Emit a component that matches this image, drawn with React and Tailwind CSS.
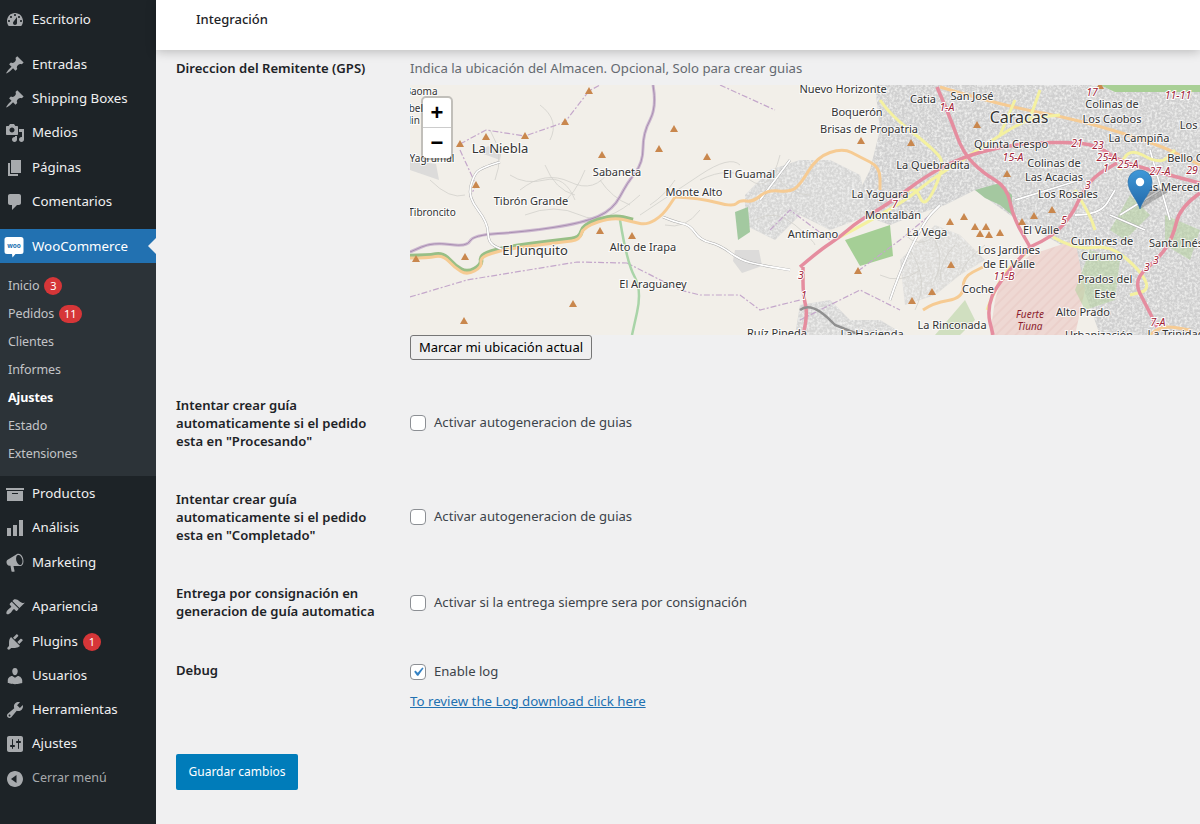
const icons = {
  dashboard: 'M3.76 16h12.48c1.1-1.37 1.76-3.11 1.76-5 0-4.42-3.58-8-8-8s-8 3.58-8 8c0 1.89.66 3.63 1.76 5zM10 4c.55 0 1 .45 1 1s-.45 1-1 1-1-.45-1-1 .45-1 1-1zM6 6c.55 0 1 .45 1 1s-.45 1-1 1-1-.45-1-1 .45-1 1-1zm8 0c.55 0 1 .45 1 1s-.45 1-1 1-1-.45-1-1 .45-1 1-1zm-5.37 5.55L12 7v6c0 1.1-.9 2-2 2s-2-.9-2-2c0-.57.24-1.08.63-1.45zM4 10c.55 0 1 .45 1 1s-.45 1-1 1-1-.45-1-1 .45-1 1-1zm12 0c.55 0 1 .45 1 1s-.45 1-1 1-1-.45-1-1 .45-1 1-1z',
  pin: 'M10.44 3.02l1.82-1.82 6.36 6.35-1.83 1.82c-1.05-.68-2.48-.57-3.41.36l-.75.75c-.92.93-1.04 2.35-.35 3.41l-1.83 1.82-2.41-2.41-2.8 2.79c-.42.42-3.38 2.71-3.8 2.29s1.86-3.39 2.28-3.81l2.79-2.79L4.1 9.36l1.83-1.82c1.05.69 2.48.57 3.4-.36l.75-.75c.93-.92 1.05-2.35.36-3.41z',
  media: 'M13 11V4c0-.55-.45-1-1-1h-1.67L9 1H5L3.67 3H2c-.55 0-1 .45-1 1v7c0 .55.45 1 1 1h10c.55 0 1-.45 1-1zM7 4.5c1.38 0 2.5 1.12 2.5 2.5S8.38 9.5 7 9.5 4.5 8.38 4.5 7 5.62 4.5 7 4.5zM14 6h5v10.5c0 1.38-1.12 2.5-2.5 2.5S14 17.88 14 16.5s1.12-2.5 2.5-2.5c.17 0 .34.02.5.05V9h-3V6zm-4 8.05V13h2v3.5c0 1.38-1.12 2.5-2.5 2.5S7 17.88 7 16.5 8.12 14 9.5 14c.17 0 .34.02.5.05z',
  page: 'M6 15V2h10v13H6zm-1 1h8v2H3V5h2v11z',
  comment: 'M5 2h9c1.1 0 2 .9 2 2v7c0 1.1-.9 2-2 2h-2l-5 5v-5H5c-1.1 0-2-.9-2-2V4c0-1.1.9-2 2-2z',
  archive: 'M19 4v2H1V4h18zM2 7h16v10H2V7zm11 3V9H7v1h6z',
  chart: 'M18 18V2h-4v16h4zm-6 0V7H8v11h4zm-6 0v-8H2v8h4z',
  megaphone: 'M18.15 5.94c.46 1.62.38 3.22-.02 4.48-.42 1.28-1.26 2.18-2.3 2.48-.16.06-.26.06-.4.06-.06.02-.12.02-.18.02-.06.02-.14.02-.22.02H8.5l1.1 5.2c.02.14-.06.26-.14.34-.08.1-.24.16-.34.16H6.95c-.1 0-.26-.06-.34-.16-.08-.08-.16-.2-.14-.34l-1-5.5H4.25c-.5.06-1.08-.18-1.54-.62s-.88-1.08-1.06-1.88c-.24-.8-.2-1.56-.02-2.2.18-.62.58-1.08 1.06-1.3l9.02-5.42c.1-.06.18-.1.24-.16.06-.04.14-.08.24-.12.16-.08.28-.12.5-.18 1.04-.3 2.24.1 3.22.98s1.84 2.24 2.26 3.86zm-2.58 5.98c.4-.1.74-.34 1.04-.7.58-.7.86-1.76.86-3.04 0-.64-.1-1.3-.26-1.98-.34-1.36-1.02-2.5-1.78-3.24s-1.68-1.1-2.46-.88c-.82.22-1.4.96-1.7 2-.32 1.04-.28 2.36.06 3.72.38 1.36 1 2.5 1.8 3.24.78.74 1.62 1.1 2.44.88z',
  brush: 'M14.48 11.06L7.41 3.99l1.5-1.5c.5-.56 2.3-.47 3.51.32 1.21.8 1.43 1.28 2.91 2.1 1.18.64 2.45 1.26 4.45.85zm-.71.71L6.7 4.7 4.93 6.47c-.39.39-.39 1.02 0 1.41l1.06 1.06c.39.39.39 1.03 0 1.42-.6.6-1.43 1.11-2.21 1.69-.35.26-.7.53-1.01.84-1.35 1.34-1.86 3.15-1.05 4c.84.81 2.65.29 4.02-1.09.31-.31.58-.66.84-1.01.58-.78 1.09-1.61 1.69-2.21.39-.39 1.03-.39 1.42 0l1.06 1.06c.39.39 1.02.39 1.41 0z',
  plugin: 'M13.11 4.36L9.87 7.6 8 5.73l3.24-3.24c.35-.34 1.05-.2 1.56.32.52.51.66 1.21.31 1.55zm-8 1.77l.91-1.12 9.01 9.01-1.19.84c-.71.71-2.63 1.16-3.82 1.16H6.14L4.9 17.26c-.59.59-1.54.59-2.12 0-.59-.58-.59-1.53 0-2.12l1.24-1.24v-3.88c0-1.13.4-3.19 1.09-3.89zm7.26 3.97l3.24-3.24c.34-.35 1.04-.21 1.55.31.52.51.66 1.21.31 1.55l-3.24 3.25z',
  users: 'M10 9.25c-2.27 0-2.73-3.44-2.73-3.44C7 4.02 7.82 2 9.97 2c2.16 0 2.98 2.02 2.71 3.81 0 0-.41 3.44-2.68 3.44zm0 2.57L12.72 10c2.39 0 4.52 2.33 4.52 4.53v2.49s-3.65 1.13-7.24 1.13c-3.65 0-7.24-1.13-7.24-1.13v-2.49c0-2.25 1.94-4.48 4.47-4.48z',
  tools: 'M16.68 9.77c-1.34 1.34-3.3 1.67-4.95.99l-5.41 6.52c-.99.99-2.59.99-3.58 0s-.99-2.59 0-3.57l6.52-5.42c-.68-1.65-.35-3.61.99-4.95 1.28-1.28 3.12-1.62 4.72-1.06l-2.89 2.89 2.82 2.82 2.86-2.87c.53 1.58.18 3.39-1.08 4.65zM3.81 16.21c.4.39 1.04.39 1.43 0 .4-.4.4-1.04 0-1.43-.39-.4-1.03-.4-1.43 0-.39.39-.39 1.03 0 1.43z',
  settings: 'M18 16V4c0-1.1-.9-2-2-2H4c-1.1 0-2 .9-2 2v12c0 1.1.9 2 2 2h12c1.1 0 2-.9 2-2zM8 11h1c.55 0 1 .45 1 1s-.45 1-1 1H8v1.5c0 .28-.22.5-.5.5s-.5-.22-.5-.5V13H6c-.55 0-1-.45-1-1s.45-1 1-1h1V5.5c0-.28.22-.5.5-.5s.5.22.5.5V11zm5-2h-1c-.55 0-1-.45-1-1s.45-1 1-1h1V5.5c0-.28.22-.5.5-.5s.5.22.5.5V7h1c.55 0 1 .45 1 1s-.45 1-1 1h-1v5.5c0 .28-.22.5-.5.5s-.5-.22-.5-.5V9z',
  collapse: 'M18 10c0-4.42-3.58-8-8-8s-8 3.58-8 8 3.58 8 8 8 8-3.58 8-8zm-6.5 4L6 10l5.5-4v8z',
}

function Dashicon({ name, className = 'text-[#a7aaad]' }) {
  return (
    <svg viewBox="0 0 20 20" className={`w-5 h-5 shrink-0 ${className}`} fill="currentColor" fillRule="evenodd">
      <path d={icons[name]} />
    </svg>
  )
}

function Badge({ n }) {
  return (
    <span className="ml-[5px] min-w-[18px] h-[18px] px-[5px] rounded-full bg-[#d63638] text-white text-[11px] leading-[18px] text-center">{n}</span>
  )
}

function MenuItem({ icon, label, badge }) {
  return (
    <div className="flex items-center h-[34.25px] pt-[2px] pl-[5px]">
      <Dashicon name={icon} />
      <span className="ml-[7px] text-[13.3px] text-[#f0f0f1]">{label}</span>
      {badge && <Badge n={badge} />}
    </div>
  )
}

function SubItem({ label, badge, current }) {
  return (
    <div className={`flex items-center h-[28px] pt-[2px] pl-2 text-[12.5px] ${current ? 'font-bold text-white' : 'text-[#c3c4c7]'}`}>
      <span className="tracking-[-0.1px]">{label}</span>
      {badge && <Badge n={badge} />}
    </div>
  )
}

function Sidebar() {
  return (
    <aside className="w-[156px] shrink-0 bg-[#1d2327] pt-[1.5px]">
      <MenuItem icon="dashboard" label="Escritorio" />
      <div className="h-[11px]" />
      <MenuItem icon="pin" label="Entradas" />
      <MenuItem icon="pin" label="Shipping Boxes" />
      <MenuItem icon="media" label="Medios" />
      <MenuItem icon="page" label="Páginas" />
      <MenuItem icon="comment" label="Comentarios" />
      <div className="h-[11px]" />
      <div className="relative flex items-center h-[34px] pt-[2px] pl-1 bg-[#2271b1]">
        <svg viewBox="0 0 20 22" className="w-5 h-[22px] shrink-0">
          <path d="M3 1h14a2.5 2.5 0 0 1 2.5 2.5v12a2.5 2.5 0 0 1-2.5 2.5h-5.5l-3 3.5-.5-3.5H3a2.5 2.5 0 0 1-2.5-2.5v-12A2.5 2.5 0 0 1 3 1z" fill="#fff" />
          <text x="10" y="12" textAnchor="middle" fontSize="6.5" fontWeight="700" fill="#2271b1" fontFamily="'Noto Sans', sans-serif">woo</text>
        </svg>
        <span className="ml-2 text-[13.3px] text-white">WooCommerce</span>
        <span className="absolute right-0 top-[9px] border-y-8 border-r-8 border-y-transparent border-r-[#f0f0f1]" />
      </div>
      <div className="bg-[#2c3338] py-2 h-[213px]">
        <SubItem label="Inicio" badge="3" />
        <SubItem label="Pedidos" badge="11" />
        <SubItem label="Clientes" />
        <SubItem label="Informes" />
        <SubItem label="Ajustes" current />
        <SubItem label="Estado" />
        <SubItem label="Extensiones" />
      </div>
      <MenuItem icon="archive" label="Productos" />
      <MenuItem icon="chart" label="Análisis" />
      <MenuItem icon="megaphone" label="Marketing" />
      <div className="h-[10.5px]" />
      <MenuItem icon="brush" label="Apariencia" />
      <MenuItem icon="plugin" label="Plugins" badge="1" />
      <MenuItem icon="users" label="Usuarios" />
      <MenuItem icon="tools" label="Herramientas" />
      <MenuItem icon="settings" label="Ajustes" />
      <div className="flex items-center h-[34px] pt-[2px] pl-[5px]">
        <Dashicon name="collapse" />
        <span className="ml-[7px] text-[12.5px] text-[#a7aaad]">Cerrar menú</span>
      </div>
    </aside>
  )
}

const triangles = [
  [589,91],[565,122],[674,129],[486,137],[525,136],[460,144],[659,149],[602,155],[707,157],[476,185],[600,231],[632,236],[465,257],[416,259],[573,304],[464,321],
  [977,125],[861,141],[911,143],[1007,174],[950,222],[964,217],[975,227],[986,227],[980,234],[989,235],[1000,233],[1022,222],[1034,216],[1052,210],[858,271],[951,265],[932,292],[912,301],[1100,86],
]

const places = [
  ['Baoma',421,91,10],['Isabel',409,108,10],['Colin',408,120,10],
  ['La Niebla',500,148,13],['Sabaneta',617,172,11],['El Guamal',749,174,11],['Monte Alto',694,192,11],['Tibrón Grande',531,201,11],['Tibroncito',432,212,10],['El Junquito',535,250,13],['Alto de Irapa',643,247,11],['El Araguaney',653,284,11],['Ruíz Pineda',777,333,11],['Yagrumal',432,158,10],
  ['Nuevo Horizonte',843,89,11],['Catia',923,99,11],['San José',972,96,11],['Caracas',1019,117,16],['Colinas de',1112,104,11],['Los Caobos',1112,119,11],['Boquerón',857,112,11],['Brisas de Propatria',869,129,11],['Los M',1195,125,11],['La Campiña',1139,138,11],['Quinta Crespo',1011,144,11],['La Quebradita',933,165,11],['Colinas de',1054,163,11],['Las Acacias',1054,177,11],['Bello Ca',1188,158,11],['Las Mercedes',1176,187,11],['La Yaguara',880,194,11],['Los Rosales',1068,194,11],['Montalbán',893,215,11],['Antímano',813,234,11],['La Vega',927,232,11],['El Valle',1041,230,11],['Cumbres de',1102,241,11],['Curumo',1102,256,11],['Santa Inés',1176,243,11],['Los Jardines',1009,250,11],['de El Valle',1009,264,11],['Prados del',1105,279,11],['Este',1105,294,11],['Coche',978,289,11],['Alto Prado',1083,312,11],['La Rinconada',952,325,11],['Urbanización',1099,335,11],['La Trinidad',1176,334,11],['La Hacienda',872,334,11],
]

const refs = [
  ['1-A',947,107],['17',1092,92],['11-11',1178,95],['21',1077,143],['23',1098,145],['25-A',1107,157],['25-A',1128,164],['27-A',1160,171],['29',1192,170],['15-A',1013,157],['1',1106,168],['3',1088,185],['7',895,204],['5',1064,220],['3',1156,260],['3',1147,267],['11-B',1004,276],['7-A',1158,322],['3',801,275],['1',804,295],
]

const pinkRoads = [
  'M800 267L820 250L840 237L857 222L890 203L927 175L963 157L1000 147L1033 143L1077 142L1100 147L1117 160L1150 170L1200 183',
  'M937 87L950 117L963 153L983 173L1007 187L1013 217L1030 247',
  'M1030 247L1053 237L1073 213L1080 197L1093 177L1117 163',
  'M1200 193L1180 207L1173 237L1160 257L1133 280L1147 307L1157 327',
  'M1030 247L997 283L987 310L993 335',
  'M803 335L808 315L803 295L803 267',
]
const yellowRoads = [
  'M840 237L900 205L930 180L963 160L1000 135L1030 118L1060 115',
  'M880 100L890 115L935 150L945 165L925 210L915 185L895 200',
  'M1000 135L1015 100M1030 118L1040 90M1075 190L1090 215L1095 230',
  'M1053 237L1075 250L1110 245L1140 270L1150 290L1130 295',
  'M1120 170L1125 145L1160 165L1175 150',
  'M987 310L1000 275L1030 250',
]
const orangeRoads = [
  'M410 258L428 258L443 255L455 268L467 275L482 267L480 257L503 250L530 246L563 242L580 240L583 227L613 217L633 222L647 225L663 215L675 197',
  'M675 197L700 198L733 207L740 200L753 202L767 190L790 192L800 185L817 157L843 148L860 157L880 167L880 190',
  'M923 310L933 303L963 298L963 277L983 267',
  'M940 87L1000 105L1080 120L1160 145L1200 165',
  'M1150 335L1160 325L1190 330',
]
const whiteRoads = [
  'M500 162L480 168L473 177L468 197L488 223L488 243L503 250',
  'M663 217L675 222L690 225L700 240L720 245L740 260L760 265L790 270',
  'M1015 200L1080 180M1075 215L1100 215L1115 190M1110 215L1145 230',
  'M890 300L900 270L925 220L940 205M1160 190L1120 215',
  'M790 160L760 200M1150 150L1170 220',
]
const dashed = [
  'M410 297L467 280L577 262L627 263',
  'M460 144L486 130L525 136L565 122L589 91L600 85',
  'M460 150L476 185L470 197',
  'M627 263L680 290L700 295L740 295L760 310L800 300',
  'M720 85L775 110M858 271L900 240L930 215',
  'M800 320L860 290L900 310M770 230L790 210L830 240',
]
const contours = [
  'M520 190q25-20 50-8t40-12M525 215q30-12 55 0t60-20M600 180q12 18 30 25M640 215q30-20 60-40t40-10',
  'M700 180q30-15 50 0t30-25M490 130q15 25 5 50M540 105q20 15 10 35M430 180q20 20 35 15',
  'M755 220q20-12 40 5t20 20M775 175q15 20 35 20M910 250q20 30 5 60M880 275q20 10 40-5',
  'M510 175q15 10 35 5t30 20M545 165q10 25 30 30M585 170q-10 25-25 35M650 205q15-10 25-25M665 225q20 5 35-15',
  'M935 240q10 20 0 40M955 245q-15 15-15 35M985 245q-20 15-25 30M905 235q15 15 30 0',
]

// turns straight polylines into smooth curves through the segment midpoints
function smooth(d) {
  return d.split('M').filter(Boolean).map((seg) => {
    const pts = seg.split('L').map((p) => p.trim().split(' ').map(Number))
    if (pts.length < 3) return `M${seg}`
    let out = `M${pts[0][0]} ${pts[0][1]}`
    for (let i = 1; i < pts.length - 1; i++) {
      const mx = (pts[i][0] + pts[i + 1][0]) / 2
      const my = (pts[i][1] + pts[i + 1][1]) / 2
      out += `Q${pts[i][0]} ${pts[i][1]} ${mx} ${my}`
    }
    const last = pts[pts.length - 1]
    return `${out}L${last[0]} ${last[1]}`
  }).join('')
}

const boundary = 'M653 85L657 107L643 133L643 163L627 183L613 210L583 223L523 232L473 235L467 247L433 242L410 252'
const urban = 'M875 85H1200V335H1100L1070 250L1010 215L975 190L945 205L915 215L890 225L850 210L870 170L880 130Z'
const urban2 = 'M745 195L770 170L800 160L830 160L860 175L870 215L830 230L800 215L775 240L745 225Z'
const urban3 = 'M900 260L935 225L960 235L985 260L960 275L935 295L905 305Z'
const urban4 = 'M800 305L830 300L850 320L880 320L905 335H795Z'

function MapDrawing() {
  return (
    <svg viewBox="410 85 790 250" className="block w-[790px] h-[250px]" fontFamily="'Noto Sans', sans-serif">
      <defs>
        <filter id="grain" x="0" y="0" width="100%" height="100%">
          <feTurbulence type="fractalNoise" baseFrequency="0.4" numOctaves="2" seed="4" />
          <feColorMatrix values="0 0 0 0 0.87  0 0 0 0 0.87  0 0 0 0 0.86  0 0 0 2.4 -0.9" />
          <feComposite in2="SourceGraphic" operator="in" />
        </filter>
        <pattern id="military" width="7" height="7" patternUnits="userSpaceOnUse" patternTransform="rotate(-45)">
          <rect width="7" height="7" fill="#eed8d3" />
          <path d="M0 3H7" stroke="#e6c4bf" strokeWidth="0.8" />
        </pattern>
        <linearGradient id="markerBlue" x1="0" y1="0" x2="0" y2="1">
          <stop offset="0" stopColor="#3f98d8" />
          <stop offset="1" stopColor="#2368a8" />
        </linearGradient>
      </defs>
      <rect x="410" y="85" width="790" height="250" fill="#f2efe9" />

      {/* urban and built-up areas */}
      <path d={urban} fill="#cfcfcf" />
      <path d={urban} fill="#fff" filter="url(#grain)" />
      <path d={urban2} fill="#d6d6d5" />
      <path d={urban2} fill="#fff" filter="url(#grain)" />
      <path d={urban3} fill="#dddcd9" />
      <path d={urban3} fill="#fff" filter="url(#grain)" />
      <path d={urban4} fill="#d6d6d5" />
      <path d={urban4} fill="#fff" filter="url(#grain)" />
      <path d="M1000 283L1030 255L1075 240L1085 290L1075 335H990L995 300Z" fill="url(#military)" />
      <path d="M735 212L748 207L750 232L738 240Z" fill="#a3c9a0" />
      <path d="M845 240L890 225L893 256L860 266Z" fill="#a5cf96" />
      <path d="M975 190L1000 183L1012 195L1012 215L1000 205L985 198Z" fill="#a4c8a0" />
      <path d="M1110 230L1130 195L1150 215L1125 240ZM1075 290L1090 250L1120 260L1115 300L1085 310ZM1165 215L1200 230L1190 260L1165 245ZM935 335L965 300L975 320L960 335Z" fill="#b5d29f" opacity="0.55" />
      <path d="M1100 85H1200V92L1115 92Z" fill="#a8cf95" />
      <path d="M735 250h24l3 16-20 7-9-12zM500 160l-22-8 10-6 14 5zM410 160l26 4 3 16-29-10z" fill="#d6d6d6" opacity="0.8" />

      {contours.map((d, i) => <path key={i} d={d} fill="none" stroke="#d2d0cb" strokeWidth="0.8" />)}
      <path d={smooth(boundary)} fill="none" stroke="#cdb9d0" strokeWidth="3" />
      <path d={smooth(boundary)} fill="none" stroke="#a98fb2" strokeWidth="1" />
      {dashed.map((d, i) => <path key={i} d={d} fill="none" stroke="#c4a7cb" strokeWidth="1.2" strokeDasharray="6 2 2 2" />)}
      <path d={smooth('M620 220L627 263L642 290L632 335')} fill="none" stroke="#a9d4a8" strokeWidth="2.5" />
      <path d={smooth('M410 256L428 256L443 253L455 266L467 273L482 265L480 255L503 248L530 244L563 240L580 238L583 225L613 215L633 220')} fill="none" stroke="#98bf86" strokeWidth="4.5" />
      {whiteRoads.map((d, i) => (
        <g key={i} fill="none">
          <path d={smooth(d)} stroke="#a9a9a9" strokeWidth="2.6" />
          <path d={smooth(d)} stroke="#fff" strokeWidth="1.8" />
        </g>
      ))}
      {orangeRoads.map((d, i) => <path key={i} d={smooth(d)} fill="none" stroke="#f6cb93" strokeWidth="3" />)}
      {yellowRoads.map((d, i) => <path key={i} d={smooth(d)} fill="none" stroke="#f4f1a0" strokeWidth="3" />)}
      {pinkRoads.map((d, i) => <path key={i} d={smooth(d)} fill="none" stroke="#e58d9f" strokeWidth="3.5" />)}
      <path d="M800 310Q812 300 835 325L860 335" fill="none" stroke="#8f8f8f" strokeWidth="2.5" />

      {triangles.map(([x, y], i) => <path key={i} d={`M${x} ${y - 4}l4 7h-8z`} fill="#c9874d" />)}

      {places.map(([t, x, y, size], i) => (
        <text key={i} x={x} y={y + size * 0.36} textAnchor="middle" fontSize={size} fill="#333" stroke="#fff" strokeWidth="2" strokeOpacity="0.8" paintOrder="stroke">{t}</text>
      ))}
      {refs.map(([t, x, y], i) => (
        <text key={i} x={x} y={y + 4} textAnchor="middle" fontSize="10.5" fontStyle="italic" fill="#a02338" stroke="#fff" strokeWidth="2" paintOrder="stroke">{t}</text>
      ))}
      <text x="1030" y="318" textAnchor="middle" fontSize="10" fontStyle="italic" fill="#8c1d2e">Fuerte</text>
      <text x="1030" y="330" textAnchor="middle" fontSize="10" fontStyle="italic" fill="#8c1d2e">Tiuna</text>

      {/* marker */}
      <path d="M1140 209L1168 192Q1160 186 1150 190Z" fill="#000" opacity="0.22" />
      <path d="M1140 209C1137 199 1128 192 1128 182A12 12 0 0 1 1152 182C1152 192 1143 199 1140 209Z" fill="url(#markerBlue)" stroke="#2a6fa8" strokeWidth="0.6" />
      <circle cx="1140" cy="182" r="4.2" fill="#fff" />
    </svg>
  )
}

function Check({ checked, label }) {
  return (
    <label className="flex items-center">
      <span className="w-4 h-4 rounded-[4px] border border-[#8c8f94] bg-white flex items-center justify-center">
        {checked && (
          <svg viewBox="0 0 20 20" className="w-[18px] h-[18px] shrink-0">
            <path d="M14.83 4.89l1.34.94-5.81 8.38H9.02L5.78 9.67l1.34-1.25 2.57 2.4z" fill="#3582c4" />
          </svg>
        )}
      </span>
      <span className="ml-2 text-[13.1px] text-[#3c434a]">{label}</span>
    </label>
  )
}

function Row({ label, className = '', children }) {
  return (
    <div className={`grid grid-cols-[234px_1fr] ${className}`}>
      <div className="font-semibold text-[13.1px] text-[#1d2327] leading-[18px] pr-[34px]">{label}</div>
      <div>{children}</div>
    </div>
  )
}

export default function App() {
  return (
    <div className="flex h-[824px] overflow-hidden bg-[#f0f0f1] text-[13px] font-['Noto_Sans','Open_Sans',sans-serif]">
      <Sidebar />
      <main className="flex-1 min-w-0">
        <header className="relative h-[50px] bg-white shadow-[0_2px_10px_rgba(0,0,0,0.22)] pl-10 flex items-center pb-[10px] font-medium text-[#1d2327]">
          Integración
        </header>
        <div className="pl-5 pt-[9px]">
          <Row label="Direccion del Remitente (GPS)">
            <p className="text-[13.17px] text-[#646970] leading-[18px] mb-[8px]">Indica la ubicación del Almacen. Opcional, Solo para crear guias</p>
            <div className="relative w-[790px] h-[250px] overflow-hidden">
              <MapDrawing />
              <div className="absolute left-[11px] top-[11px] w-[32px] border-2 border-black/20 rounded-[5px] bg-clip-padding">
                <div className="h-[30px] bg-white rounded-t-[4px] border-b border-[#ccc] flex items-center justify-center text-[22px] font-bold text-black leading-none font-['Liberation_Sans',sans-serif]">+</div>
                <div className="h-[30px] bg-white rounded-b-[4px] flex items-center justify-center text-[22px] font-bold text-black leading-none font-['Liberation_Sans',sans-serif]">−</div>
              </div>
            </div>
            <button className="block h-[25px] w-[182px] pt-[1px] border border-[#767676] rounded-[3px] bg-[#efefef] text-black text-[13px]">Marcar mi ubicación actual</button>
          </Row>
          <Row label={'Intentar crear guía automaticamente si el pedido esta en "Procesando"'} className="mt-[36px]">
            <div className="pt-[17px]"><Check label="Activar autogeneracion de guias" /></div>
          </Row>
          <Row label={'Intentar crear guía automaticamente si el pedido esta en "Completado"'} className="mt-[40px]">
            <div className="pt-[17px]"><Check label="Activar autogeneracion de guias" /></div>
          </Row>
          <Row label="Entrega por consignación en generacion de guía automatica" className="mt-[40px]">
            <div className="pt-[9px]"><Check label="Activar si la entrega siempre sera por consignación" /></div>
          </Row>
          <Row label="Debug" className="mt-[41px]">
            <div className="pt-[1px]"><Check checked label="Enable log" /></div>
            <a className="block mt-[10px] text-[13.28px] text-[#2271b1] underline">To review the Log download click here</a>
          </Row>
          <button className="mt-[42px] w-[122px] h-9 pt-[1px] rounded-[2px] bg-[#007cba] text-white text-[12px]">Guardar cambios</button>
        </div>
      </main>
    </div>
  )
}
